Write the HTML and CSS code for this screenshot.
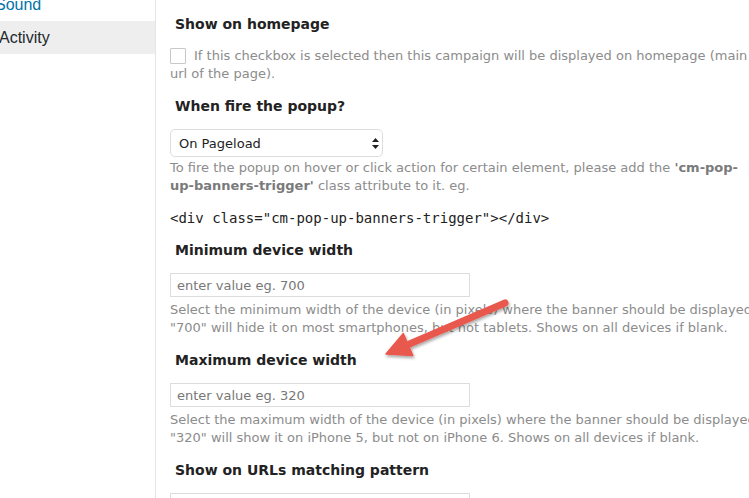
FILE: index.html
```html
<!DOCTYPE html>
<html>
	<head>
		<title>Pop-Up Banner settings</title>
		<link rel="stylesheet" href="styles.css">
	</head>
	<body>
		<div class="page">
			<aside class="sidebar">
				<ul class="menu">
					<li class="sound"><a href="#">Sound</a></li>
					<li class="current">Activity</li>
				</ul>
			</aside>
			<main class="settings">
				<div class="field">
					<h4>Show on homepage</h4>
					<p class="desc"><input class="check" type="checkbox">If this checkbox is selected then this campaign will be displayed on homepage (main<br>url of the page).</p>
				</div>
				<div class="field">
					<h4>When fire the popup?</h4>
					<div class="select-wrap">
						<select class="select">
							<option>On Pageload</option>
						</select>
						<svg class="select-arrows" width="7" height="11" viewBox="0 0 7 11"><path d="M3.5 0 L7 4 L0 4 Z M0 7 L7 7 L3.5 11 Z" fill="#222"/></svg>
					</div>
					<p class="desc after-select">To fire the popup on hover or click action for certain element, please add the <b>'cm-pop-</b><br><b>up-banners-trigger'</b> class attribute to it. eg.</p>
					<p class="code">&lt;div class="cm-pop-up-banners-trigger"&gt;&lt;/div&gt;</p>
				</div>
				<div class="field">
					<h4>Minimum device width</h4>
					<input class="text" type="text" placeholder="enter value eg. 700">
					<p class="desc">Select the minimum width of the device (in pixels) where the banner should be displayed<br>"700" will hide it on most smartphones, but not tablets. Shows on all devices if blank.</p>
				</div>
				<div class="field">
					<h4>Maximum device width</h4>
					<input class="text" type="text" placeholder="enter value eg. 320">
					<p class="desc">Select the maximum width of the device (in pixels) where the banner should be displayed<br>"320" will show it on iPhone 5, but not on iPhone 6. Shows on all devices if blank.</p>
				</div>
				<div class="field">
					<h4>Show on URLs matching pattern</h4>
					<input class="text" type="text">
				</div>
			</main>
			<!-- annotation arrow drawn over the page -->
			<svg class="arrow" width="749" height="498" viewBox="0 0 749 498">
				<defs>
					<filter id="shadow" x="-20%" y="-20%" width="140%" height="140%">
						<feDropShadow dx="1" dy="2" stdDeviation="1.5" flood-color="#000" flood-opacity="0.35"/>
					</filter>
				</defs>
				<g filter="url(#shadow)" fill="#e9594e" stroke="#e9594e">
					<line x1="505" y1="303" x2="410" y2="343.8" stroke-width="7" stroke-linecap="round"/>
					<polygon points="386,354 403.3,333.5 412.8,355.6" stroke-width="1.5" stroke-linejoin="round"/>
				</g>
			</svg>
		</div>
	</body>
</html>
```

FILE: styles.css
```css
html, body
{
	margin: 0;
	height: 100%;
	overflow: hidden;
	background-color: #fff;
}

.page
{
	display: flex;
	height: 100%;
	font-family: "DejaVu Sans", Verdana, sans-serif;
	font-size: 13px;
	color: #23282d;
}

.sidebar
{
	width: 155px;
	flex-shrink: 0;
	border-right: 1px solid #e5e5e5;
	overflow: hidden;
}

.menu
{
	list-style: none;
	margin: -12px 0 0 0;
	padding: 0;
	font-family: "Liberation Sans", Arial, sans-serif;
	font-size: 16px;
}

.menu li
{
	height: 33px;
	line-height: 33px;
	text-indent: -1px;
	white-space: nowrap;
}

.menu .sound
{
	text-indent: -5px;
}

.menu a
{
	color: #0073aa;
	text-decoration: none;
}

.menu .current
{
	background-color: #eee;
	color: #23282d;
}

.settings
{
	flex: 1;
	padding: 14px 0 0 14px;
	white-space: nowrap;
}

.field
{
	margin-bottom: 13px;
}

.field h4
{
	margin: 0 0 13px 0;
	padding-left: 5px;
	font-size: 14px;
	line-height: 20px;
	font-weight: bold;
	color: #222;
}

.desc
{
	margin: 4px 0 0 0;
	line-height: 18px;
	color: #8c8c8c;
}

.desc b
{
	color: #7a7a7a;
}

.field h4 + .desc
{
	margin-top: 0;
}

.after-select
{
	margin-top: 2px;
}

.check
{
	-webkit-appearance: none;
	appearance: none;
	width: 16px;
	height: 16px;
	margin: 1px 8px 0 0;
	vertical-align: top;
	border: 1px solid #c8c8c8;
	border-radius: 1px;
	background-color: #fff;
	box-sizing: border-box;
}

.select-wrap
{
	position: relative;
	width: 213px;
	height: 28px;
}

.select
{
	-webkit-appearance: none;
	appearance: none;
	width: 213px;
	height: 28px;
	margin: 0;
	padding: 0 0 0 8px;
	border: 1px solid #ddd;
	border-radius: 5px;
	background-color: #fff;
	font-family: "DejaVu Sans", Verdana, sans-serif;
	font-size: 13px;
	color: #222;
}

.select-arrows
{
	position: absolute;
	left: 202px;
	top: 9px;
	pointer-events: none;
}

.code
{
	margin: 14px 0 1px 0;
	font-family: "DejaVu Sans Mono", Menlo, monospace;
	font-size: 14px;
	line-height: 18px;
	color: #222;
}

.text
{
	display: block;
	width: 300px;
	height: 24px;
	margin: 0;
	padding: 0 6px;
	box-sizing: border-box;
	border: 1px solid #ddd;
	background-color: #fff;
	font-family: "DejaVu Sans", Verdana, sans-serif;
	font-size: 13px;
	color: #222;
}

.text::placeholder
{
	color: #777;
}

.arrow
{
	position: absolute;
	left: 0;
	top: 0;
	pointer-events: none;
}
```
